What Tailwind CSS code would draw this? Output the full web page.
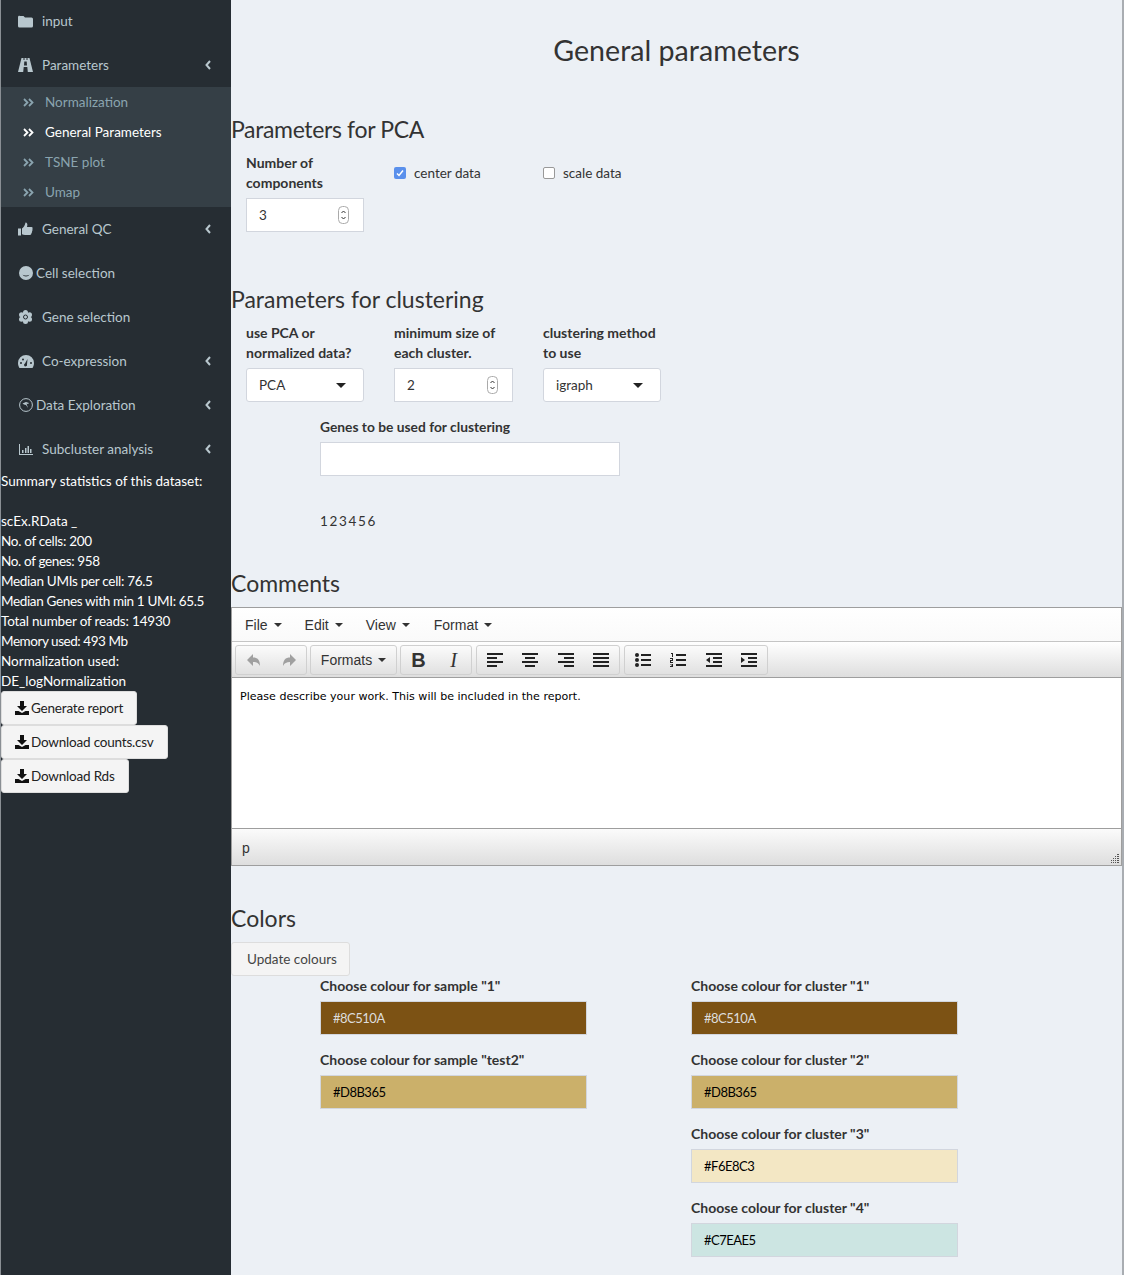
<!DOCTYPE html>
<html lang="en">

<head>
  <meta charset="UTF-8">
  <title>General parameters</title>
  <script src="https://cdn.jsdelivr.net/npm/@tailwindcss/browser@4"></script>
</head>

<body class="font-['Lato','Noto_Sans',sans-serif] text-[13.5px] leading-[20px] text-[#333] bg-[#ecf0f5]">
  <div class="flex w-[1124px] h-[1275px] overflow-hidden">
    <!-- Sidebar -->
    <aside class="w-[231px] shrink-0 bg-[#262d33] border-l border-[#8a8f94] text-[#b8c7ce]">
      <div class="h-[42px] flex items-center pl-[17px]">
        <svg class="w-[15px] h-[13px] mr-[9px] fill-[#b8c7ce]" viewBox="0 0 15 13"><path d="M1.5 1h4l1.5 1.500h6.500a1.500 1.500 0 0 1 1.500 1.500v7a1.500 1.500 0 0 1-1.500 1.500h-12a1.500 1.500 0 0 1-1.500-1.500v-9a1.500 1.500 0 0 1 1.500-1.500z"/></svg>
        <span>input</span>
      </div>
      <div class="h-[45px] flex items-center pl-[17px] pr-[20px]">
        <svg class="w-[15px] h-[14px] mr-[9px] fill-[#b8c7ce]" viewBox="0 0 15 14"><path d="M3.500 0h2v2h1V0h2v2h1V0h2l3.500 14H9.800L9.300 9H5.700l-.5 5H0zM6.300 3.500 6 7.500h3l-.3-4z"/></svg>
        <span class="flex-1">Parameters</span>
        <svg class="w-[6px] h-[10px] stroke-[#b8c7ce] fill-none" viewBox="0 0 6 10"><path d="M5 1 1.500 5 5 9" stroke-width="2"/></svg>
      </div>
      <div class="h-[120px] bg-[#353f46] text-[#8aa4af]">
        <div class="h-[30px] flex items-center pl-[22px]">
          <svg class="w-[11px] h-[9px] mr-[11px] stroke-current fill-none" viewBox="0 0 11 9"><path d="M1 1l3.500 3.500L1 8M6 1l3.500 3.500L6 8" stroke-width="1.800"/></svg>
          <span>Normalization</span>
        </div>
        <div class="h-[30px] flex items-center pl-[22px] text-white">
          <svg class="w-[11px] h-[9px] mr-[11px] stroke-current fill-none" viewBox="0 0 11 9"><path d="M1 1l3.500 3.500L1 8M6 1l3.500 3.500L6 8" stroke-width="1.800"/></svg>
          <span>General Parameters</span>
        </div>
        <div class="h-[30px] flex items-center pl-[22px]">
          <svg class="w-[11px] h-[9px] mr-[11px] stroke-current fill-none" viewBox="0 0 11 9"><path d="M1 1l3.500 3.500L1 8M6 1l3.500 3.500L6 8" stroke-width="1.800"/></svg>
          <span>TSNE plot</span>
        </div>
        <div class="h-[30px] flex items-center pl-[22px]">
          <svg class="w-[11px] h-[9px] mr-[11px] stroke-current fill-none" viewBox="0 0 11 9"><path d="M1 1l3.500 3.500L1 8M6 1l3.500 3.500L6 8" stroke-width="1.800"/></svg>
          <span>Umap</span>
        </div>
      </div>
      <div class="h-[44px] flex items-center pl-[17px] pr-[20px]">
        <svg class="w-[15px] h-[14px] mr-[9px] fill-[#b8c7ce]" viewBox="0 0 15 14"><path d="M0 6.500h3v7h-3zM4 6.500c1.500-1 3-3 3.500-6 1.500 0 2.500 1.500 1.500 4.500h4.500c1.200 0 1.500 1.500.8 2 .5.800.3 1.700-.3 2.100.3.900 0 1.700-.6 2 .2 1.100-.4 1.900-1.400 1.900h-5c-1 0-2-.5-3-.8z"/></svg>
        <span class="flex-1">General QC</span>
        <svg class="w-[6px] h-[10px] stroke-[#b8c7ce] fill-none" viewBox="0 0 6 10"><path d="M5 1 1.500 5 5 9" stroke-width="2"/></svg>
      </div>
      <div class="h-[44px] flex items-center pl-[18px]">
        <svg class="w-[14px] h-[14px] mr-[3px] fill-[#b8c7ce]" viewBox="0 0 14 14"><path fill-rule="evenodd" d="M7 0a7 7 0 1 1 0 14A7 7 0 0 1 7 0zM3.500 8.500C4.500 11 9.500 11 10.500 8.500 9 9.800 5 9.800 3.500 8.500z"/></svg>
        <span>Cell selection</span>
      </div>
      <div class="h-[44px] flex items-center pl-[18px]">
        <svg class="w-[13px] h-[14px] mr-[10px]" viewBox="0 0 13 14"><g fill="#b8c7ce"><circle cx="6.500" cy="2.500" r="2.500"/><circle cx="6.500" cy="11.500" r="2.500"/><circle cx="2.500" cy="4.700" r="2.500"/><circle cx="10.500" cy="4.700" r="2.500"/><circle cx="2.500" cy="9.300" r="2.500"/><circle cx="10.500" cy="9.300" r="2.500"/><circle cx="6.500" cy="7" r="4.500"/></g><circle cx="6.500" cy="7" r="2" fill="none" stroke="#262d33"/></svg>
        <span>Gene selection</span>
      </div>
      <div class="h-[44px] flex items-center pl-[17px] pr-[20px]">
        <svg class="w-[16px] h-[13px] mr-[8px] fill-[#b8c7ce]" viewBox="0 0 16 13"><path fill-rule="evenodd" d="M8 0a8 8 0 0 1 8 8c0 2-.7 3.700-1.500 5h-13C.7 11.700 0 10 0 8a8 8 0 0 1 8-8zM9.500 4 7 8.500a1.500 1.500 0 1 0 2 1zM3 7a1 1 0 1 0 0 2 1 1 0 0 0 0-2zM13 7a1 1 0 1 0 0 2 1 1 0 0 0 0-2zM5 3.500a1 1 0 1 0 0 2 1 1 0 0 0 0-2z"/></svg>
        <span class="flex-1">Co-expression</span>
        <svg class="w-[6px] h-[10px] stroke-[#b8c7ce] fill-none" viewBox="0 0 6 10"><path d="M5 1 1.500 5 5 9" stroke-width="2"/></svg>
      </div>
      <div class="h-[44px] flex items-center pl-[18px] pr-[20px]">
        <svg class="w-[14px] h-[14px] mr-[3px]" viewBox="0 0 14 14"><circle cx="7" cy="7" r="6.400" fill="none" stroke="#b8c7ce"/><path d="M3.500 5.500 7 4l3 1-1 1-1.500-.5L9 10 7 7 5 6.500z" fill="#b8c7ce"/></svg>
        <span class="flex-1">Data Exploration</span>
        <svg class="w-[6px] h-[10px] stroke-[#b8c7ce] fill-none" viewBox="0 0 6 10"><path d="M5 1 1.500 5 5 9" stroke-width="2"/></svg>
      </div>
      <div class="h-[44px] flex items-center pl-[18px] pr-[20px]">
        <svg class="w-[14px] h-[11px] mr-[9px] fill-[#b8c7ce]" viewBox="0 0 14 11"><path d="M0 0h1v10h13v1H0zM3 6h1.500v3H3zM6 4h1.500v5H6zM8.500 2H10v7H8.500zM11 5h1.500v4H11z"/></svg>
        <span class="flex-1">Subcluster analysis</span>
        <svg class="w-[6px] h-[10px] stroke-[#b8c7ce] fill-none" viewBox="0 0 6 10"><path d="M5 1 1.500 5 5 9" stroke-width="2"/></svg>
      </div>

      <div class="text-white">
        <p>Summary statistics of this dataset:</p>
        <p class="mt-[20px]">scEx.RData _</p>
        <p class="tracking-[-0.3px]">No. of cells: 200</p>
        <p class="tracking-[-0.35px]">No. of genes: 958</p>
        <p class="tracking-[-0.3px]">Median UMIs per cell: 76.5</p>
        <p class="tracking-[-0.35px]">Median Genes with min 1 UMI: 65.5</p>
        <p class="tracking-[-0.18px]">Total number of reads: 14930</p>
        <p class="tracking-[-0.45px]">Memory used: 493 Mb</p>
        <p>Normalization used:</p>
        <p>DE_logNormalization</p>
      </div>

      <div class="flex flex-col items-start">
        <button class="h-[34px] flex items-center px-[13px] bg-[#f4f4f4] border border-[#ddd] rounded-[3px] text-[#222] tracking-[-0.2px]">
          <svg class="w-[14px] h-[14px] mr-[2px] fill-[#111]" viewBox="0 0 14 14"><path d="M5 0h4v5h3L7 10 2 5h3zM0 10h3.500L7 12l3.500-2H14v4H0z"/></svg>Generate report
        </button>
        <button class="h-[34px] flex items-center px-[13px] bg-[#f4f4f4] border border-[#ddd] rounded-[3px] text-[#222] tracking-[-0.2px]">
          <svg class="w-[14px] h-[14px] mr-[2px] fill-[#111]" viewBox="0 0 14 14"><path d="M5 0h4v5h3L7 10 2 5h3zM0 10h3.500L7 12l3.500-2H14v4H0z"/></svg>Download counts.csv
        </button>
        <button class="h-[34px] flex items-center px-[13px] bg-[#f4f4f4] border border-[#ddd] rounded-[3px] text-[#222] tracking-[-0.2px]">
          <svg class="w-[14px] h-[14px] mr-[2px] fill-[#111]" viewBox="0 0 14 14"><path d="M5 0h4v5h3L7 10 2 5h3zM0 10h3.500L7 12l3.500-2H14v4H0z"/></svg>Download Rds
        </button>
      </div>
    </aside>

    <!-- Main content -->
    <main class="w-[891px] shrink-0">
      <h1 class="text-[28.600px] leading-[33px] text-center pt-[34px] mb-[49px] font-normal">General parameters</h1>

      <h3 class="text-[23px] leading-[26px] h-[26px] tracking-[-0.35px]">Parameters for PCA</h3>
      <div class="flex mt-[11px] pl-[15px] h-[80px]">
        <div class="w-[148px]">
          <label class="block text-[14px] font-bold w-[118px]">Number of components</label>
          <div class="mt-[5px] w-[118px] h-[34px] bg-white border border-[#d2d6de] flex items-center justify-between pl-[12px] pr-[14px]">
            <span>3</span>
            <svg class="w-[11px] h-[18px]" viewBox="0 0 11 18"><rect x=".5" y=".5" width="10" height="17" rx="4" fill="#fff" stroke="#aaa"/><path d="M3.500 7 5.500 5l2 2M3.500 11l2 2 2-2" fill="none" stroke="#333"/></svg>
          </div>
        </div>
        <div class="w-[149px] h-[20px] mt-[10px] flex items-center gap-[8px]">
          <div class="w-[12px] h-[12px] rounded-[2px] bg-[#5a90ec] flex items-center justify-center">
            <svg class="w-[8px] h-[8px] stroke-white fill-none" viewBox="0 0 8 8"><path d="M1 4.500 3 6.500 7 1.500" stroke-width="1.500"/></svg>
          </div>
          <span>center data</span>
        </div>
        <div class="h-[20px] mt-[10px] flex items-center gap-[8px]">
          <div class="w-[12px] h-[12px] rounded-[2px] bg-white border border-[#999]"></div>
          <span>scale data</span>
        </div>
      </div>

      <h3 class="text-[23px] leading-[26px] h-[26px] mt-[53px]">Parameters for clustering</h3>
      <div class="flex mt-[11px] pl-[15px]">
        <div class="w-[148px]">
          <label class="block text-[14px] font-bold w-[118px]">use PCA or normalized data?</label>
          <div class="mt-[5px] w-[118px] h-[34px] bg-white border border-[#d2d6de] rounded-[3px] flex items-center justify-between pl-[12px] pr-[17px]">
            <span>PCA</span>
            <div class="w-0 h-0 border-x-[5px] border-x-transparent border-t-[5px] border-t-[#222]"></div>
          </div>
        </div>
        <div class="w-[149px]">
          <label class="block text-[14px] font-bold w-[118px]">minimum size of each cluster.</label>
          <div class="mt-[5px] w-[119px] h-[34px] bg-white border border-[#d2d6de] flex items-center justify-between pl-[12px] pr-[14px]">
            <span>2</span>
            <svg class="w-[11px] h-[18px]" viewBox="0 0 11 18"><rect x=".5" y=".5" width="10" height="17" rx="4" fill="#fff" stroke="#aaa"/><path d="M3.500 7 5.500 5l2 2M3.500 11l2 2 2-2" fill="none" stroke="#333"/></svg>
          </div>
        </div>
        <div class="w-[148px]">
          <label class="block text-[14px] font-bold w-[118px]">clustering method to use</label>
          <div class="mt-[5px] w-[118px] h-[34px] bg-white border border-[#d2d6de] rounded-[3px] flex items-center justify-between pl-[12px] pr-[17px]">
            <span>igraph</span>
            <div class="w-0 h-0 border-x-[5px] border-x-transparent border-t-[5px] border-t-[#222]"></div>
          </div>
        </div>
      </div>
      <div class="pl-[89px] mt-[15px]">
        <label class="block text-[13.800px] font-bold">Genes to be used for clustering</label>
        <div class="mt-[5px] w-[300px] h-[34px] bg-white border border-[#d2d6de]"></div>
        <p class="mt-[35px] tracking-[-0.9px]">1 2 3 4 5 6</p>
      </div>

      <h3 class="text-[23px] leading-[26px] h-[26px] mt-[39px]">Comments</h3>
      <!-- Editor -->
      <div class="mt-[11px] w-[891px] h-[259px] border border-[#9e9e9e] bg-white flex flex-col font-['Liberation_Sans',sans-serif] text-[14px]">
        <div class="h-[34px] flex items-center bg-gradient-to-b from-white to-[#fafafa] text-[#333] border-b border-[#c5c5c5] pl-[13px] gap-[23px]">
          <span class="flex items-center gap-[6px]">File <i class="w-0 h-0 border-x-[4px] border-x-transparent border-t-[4px] border-t-[#333]"></i></span>
          <span class="flex items-center gap-[6px]">Edit <i class="w-0 h-0 border-x-[4px] border-x-transparent border-t-[4px] border-t-[#333]"></i></span>
          <span class="flex items-center gap-[6px]">View <i class="w-0 h-0 border-x-[4px] border-x-transparent border-t-[4px] border-t-[#333]"></i></span>
          <span class="flex items-center gap-[6px] ml-[1px]">Format <i class="w-0 h-0 border-x-[4px] border-x-transparent border-t-[4px] border-t-[#333]"></i></span>
        </div>
        <div class="h-[36px] flex items-center bg-gradient-to-b from-white to-[#dedede] border-b border-[#9e9e9e] pl-[3px] gap-[3px] text-[#333]">
          <div class="h-[30px] w-[72px] border border-[#d0d0d0] rounded-[3px] flex items-center">
            <div class="flex-1 flex justify-center"><svg class="w-[14px] h-[14px] fill-[#a0a0a0]" viewBox="0 0 14 14"><path d="M6 1v3.500c4.500 0 7 2.500 7 8.500-1.500-3-3.500-4-7-4V13L0 7z"/></svg></div>
            <div class="flex-1 flex justify-center"><svg class="w-[14px] h-[14px] fill-[#a0a0a0]" viewBox="0 0 14 14"><path d="M8 1v3.500C3.500 4.500 1 7 1 13c1.500-3 3.500-4 7-4V13l6-6z"/></svg></div>
          </div>
          <div class="h-[30px] w-[87px] border border-[#d0d0d0] rounded-[3px] flex items-center justify-center gap-[6px]">Formats <i class="w-0 h-0 border-x-[4px] border-x-transparent border-t-[4px] border-t-[#333]"></i></div>
          <div class="h-[30px] w-[72px] border border-[#d0d0d0] rounded-[3px] flex items-center">
            <div class="flex-1 text-center text-[20px] leading-none font-bold">B</div>
            <div class="flex-1 text-center text-[20px] leading-none italic font-['Liberation_Serif',serif]">I</div>
          </div>
          <div class="h-[30px] w-[144px] ml-[1px] border border-[#d0d0d0] rounded-[3px] flex items-center">
            <div class="flex-1 flex justify-center"><svg class="w-[16px] h-[14px] fill-[#222]" viewBox="0 0 16 14"><path d="M0 0h16v2H0zM0 4h10v2H0zM0 8h16v2H0zM0 12h10v2H0z"/></svg></div>
            <div class="flex-1 flex justify-center"><svg class="w-[16px] h-[14px] fill-[#222]" viewBox="0 0 16 14"><path d="M0 0h16v2H0zM3 4h10v2H3zM0 8h16v2H0zM3 12h10v2H3z"/></svg></div>
            <div class="flex-1 flex justify-center"><svg class="w-[16px] h-[14px] fill-[#222]" viewBox="0 0 16 14"><path d="M0 0h16v2H0zM6 4h10v2H6zM0 8h16v2H0zM6 12h10v2H6z"/></svg></div>
            <div class="flex-1 flex justify-center"><svg class="w-[16px] h-[14px] fill-[#222]" viewBox="0 0 16 14"><path d="M0 0h16v2H0zM0 4h16v2H0zM0 8h16v2H0zM0 12h16v2H0z"/></svg></div>
          </div>
          <div class="h-[30px] w-[144px] ml-[1px] border border-[#d0d0d0] rounded-[3px] flex items-center">
            <div class="flex-1 flex justify-center"><svg class="w-[16px] h-[14px] fill-[#222]" viewBox="0 0 16 14"><circle cx="2" cy="2" r="2"/><circle cx="2" cy="7" r="2"/><circle cx="2" cy="12" r="2"/><path d="M6 1h10v2H6zM6 6h10v2H6zM6 11h10v2H6z"/></svg></div>
            <div class="flex-1 flex justify-center"><svg class="w-[16px] h-[14px] fill-[#222]" viewBox="0 0 16 14"><path d="M1 0h2v4H2V1H1zM0 5h3v3H1v1h2v1H0V7h2V6H0zM0 11h3v3H0v-1h2v-.400H1v-.600h1V11.600H0zM6 1h10v2H6zM6 6h10v2H6zM6 11h10v2H6z"/></svg></div>
            <div class="flex-1 flex justify-center"><svg class="w-[16px] h-[14px] fill-[#222]" viewBox="0 0 16 14"><path d="M0 0h16v2H0zM7 4h9v2H7zM7 8h9v2H7zM0 12h16v2H0zM4 4v6L0 7z"/></svg></div>
            <div class="flex-1 flex justify-center"><svg class="w-[16px] h-[14px] fill-[#222]" viewBox="0 0 16 14"><path d="M0 0h16v2H0zM7 4h9v2H7zM7 8h9v2H7zM0 12h16v2H0zM0 4v6l4-3z"/></svg></div>
          </div>
        </div>
        <div class="h-[150px] pl-[8px] pt-[10px] font-['DejaVu_Sans',sans-serif] text-[11.070px] leading-[17px] text-black">Please describe your work. This will be included in the report.</div>
        <div class="flex-1 relative bg-gradient-to-b from-[#fbfbfb] to-[#dedede] border-t border-[#9e9e9e] pl-[10px] pt-[2px] flex items-center text-[#333]">
          p
          <svg class="absolute right-[2px] bottom-[2px] w-[9px] h-[9px] fill-[#555]" viewBox="0 0 9 9"><path d="M7 0h2v1H7zM5 2h1v1H5zM7 2h2v1H7zM3 4h1v1H3zM5 4h1v1H5zM7 4h2v1H7zM1 6h1v1H1zM3 6h1v1H3zM5 6h1v1H5zM7 6h2v1H7zM1 8h1v1H1zM3 8h1v1H3zM5 8h1v1H5zM7 8h2v1H7z"/></svg>
        </div>
      </div>

      <h3 class="text-[23px] leading-[26px] h-[26px] mt-[39px]">Colors</h3>
      <button class="mt-[11px] h-[34px] pl-[15px] pr-[12px] bg-[#f4f4f4] border border-[#ddd] rounded-[3px] text-[#444]">Update colours</button>

      <div class="flex pl-[89px]">
        <div class="w-[371px]">
          <label class="block text-[14px] font-bold">Choose colour for sample "1"</label>
          <div class="mt-[5px] w-[267px] h-[34px] border border-[#d2d6de] bg-[#7c5214] text-[#ddd] text-[13px] tracking-[-0.5px] flex items-center pl-[12px]">#8C510A</div>
          <label class="block text-[14px] font-bold mt-[15px]">Choose colour for sample "test2"</label>
          <div class="mt-[5px] w-[267px] h-[34px] border border-[#d2d6de] bg-[#cbb06a] text-black text-[13px] tracking-[-0.5px] flex items-center pl-[12px]">#D8B365</div>
        </div>
        <div>
          <label class="block text-[14px] font-bold">Choose colour for cluster "1"</label>
          <div class="mt-[5px] w-[267px] h-[34px] border border-[#d2d6de] bg-[#7c5214] text-[#ddd] text-[13px] tracking-[-0.5px] flex items-center pl-[12px]">#8C510A</div>
          <label class="block text-[14px] font-bold mt-[15px]">Choose colour for cluster "2"</label>
          <div class="mt-[5px] w-[267px] h-[34px] border border-[#d2d6de] bg-[#cbb06a] text-black text-[13px] tracking-[-0.5px] flex items-center pl-[12px]">#D8B365</div>
          <label class="block text-[14px] font-bold mt-[15px]">Choose colour for cluster "3"</label>
          <div class="mt-[5px] w-[267px] h-[34px] border border-[#d2d6de] bg-[#f3e7c4] text-black text-[13px] tracking-[-0.5px] flex items-center pl-[12px]">#F6E8C3</div>
          <label class="block text-[14px] font-bold mt-[15px]">Choose colour for cluster "4"</label>
          <div class="mt-[5px] w-[267px] h-[34px] border border-[#d2d6de] bg-[#cce5e2] text-black text-[13px] tracking-[-0.5px] flex items-center pl-[12px]">#C7EAE5</div>
        </div>
      </div>
    </main>
    <div class="w-[2px] shrink-0 bg-[#a9adb2]"></div>
  </div>
</body>

</html>
